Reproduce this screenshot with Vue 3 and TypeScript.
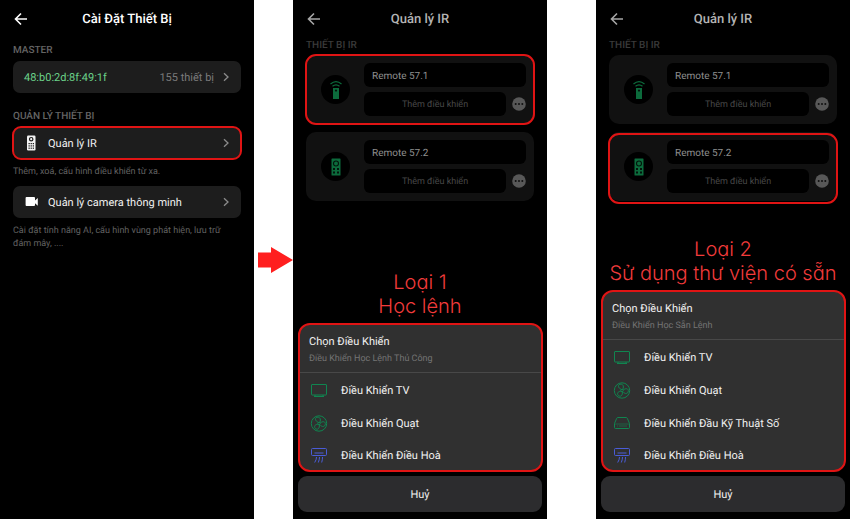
<script setup lang="ts">
type IconName = 'tv' | 'fan' | 'box' | 'ac'

interface Device {
  name: string
  icon: 'signal' | 'pad'
}

interface Option {
  icon: IconName
  label: string
}

interface Screen {
  id: string
  marked: number
  note: string[]
  subtitle: string
  options: Option[]
}

const devices: Device[] = [
  { name: 'Remote 57.1', icon: 'signal' },
  { name: 'Remote 57.2', icon: 'pad' },
]

const tv: Option = { icon: 'tv', label: 'Điều Khiển TV' }
const fan: Option = { icon: 'fan', label: 'Điều Khiển Quạt' }
const box: Option = { icon: 'box', label: 'Điều Khiển Đầu Kỹ Thuật Số' }
const ac: Option = { icon: 'ac', label: 'Điều Khiển Điều Hoà' }

const screens: Screen[] = [
  {
    id: 'learn',
    marked: 0,
    note: ['Loại 1', 'Học lệnh'],
    subtitle: 'Điều Khiển Học Lệnh Thủ Công',
    options: [tv, fan, ac],
  },
  {
    id: 'library',
    marked: 1,
    note: ['Loại 2', 'Sử dụng thư viện có sẵn'],
    subtitle: 'Điều Khiển Học Sẵn Lệnh',
    options: [tv, fan, box, ac],
  },
]
</script>

<template>
  <main class="page">
    <section class="screen settings">
      <header class="bar">
        <button class="back" type="button" aria-label="Quay lại">
          <svg width="14" height="14" viewBox="0 0 14 14"><path d="M13 7H1.5M7 1.5 1.5 7 7 12.5" /></svg>
        </button>
        <h1>Cài Đặt Thiết Bị</h1>
      </header>

      <h2 class="group">MASTER</h2>
      <button class="row" type="button">
        <span class="mac">48:b0:2d:8f:49:1f</span>
        <span class="count">155 thiết bị</span>
        <svg class="chev" width="6" height="10" viewBox="0 0 6 10"><path d="M1 1.2 5 5 1 8.8" /></svg>
      </button>

      <h2 class="group second">QUẢN LÝ THIẾT BỊ</h2>
      <button class="row marked" type="button">
        <svg class="lead" width="16" height="16" viewBox="0 0 16 16">
          <rect x="3" y="0.5" width="8.5" height="15" rx="1.2" fill="#f2f2f2" />
          <circle cx="7.2" cy="4.2" r="1.7" fill="#f2f2f2" stroke="#1d1d1d" stroke-width="1.2" />
          <g fill="#1d1d1d">
            <rect x="4.5" y="8" width="1.3" height="1.2" /><rect x="6.6" y="8" width="1.3" height="1.2" /><rect x="8.7" y="8" width="1.3" height="1.2" />
            <rect x="4.5" y="10.3" width="1.3" height="1.2" /><rect x="6.6" y="10.3" width="1.3" height="1.2" /><rect x="8.7" y="10.3" width="1.3" height="1.2" />
            <rect x="4.5" y="12.6" width="1.3" height="1.2" /><rect x="6.6" y="12.6" width="1.3" height="1.2" /><rect x="8.7" y="12.6" width="1.3" height="1.2" />
          </g>
        </svg>
        <span class="name">Quản lý IR</span>
        <svg class="chev" width="6" height="10" viewBox="0 0 6 10"><path d="M1 1.2 5 5 1 8.8" /></svg>
      </button>
      <p class="hint">Thêm, xoá, cấu hình điều khiển từ xa.</p>

      <button class="row" type="button">
        <svg class="lead" width="16" height="16" viewBox="0 0 16 16">
          <path d="M2.500 3h7.600q.9 0 .9.900v2.600l2.800-2.500v7.800L11 9.300v1.800q0 .9-.9.900H2.500q-.9 0-.9-.900V3.900q0-.9.900-.900Z" fill="#fff" />
        </svg>
        <span class="name">Quản lý camera thông minh</span>
        <svg class="chev" width="6" height="10" viewBox="0 0 6 10"><path d="M1 1.2 5 5 1 8.8" /></svg>
      </button>
      <p class="hint">Cài đặt tính năng AI, cấu hình vùng phát hiện, lưu trữ đám mây, ....</p>
    </section>

    <div class="step">
      <svg width="35" height="26" viewBox="0 0 35 26"><path d="M0 5.500h13V0l22 13-22 13v-5.500H0Z" fill="#ff1f1f" /></svg>
    </div>

    <section v-for="s in screens" :key="s.id" class="screen remote" :class="s.id">
      <header class="bar">
        <button class="back" type="button" aria-label="Quay lại">
          <svg width="14" height="14" viewBox="0 0 14 14"><path d="M13 7H1.500M7 1.500 1.500 7 7 12.500" /></svg>
        </button>
        <h1>Quản lý IR</h1>
      </header>

      <h2 class="group">THIẾT BỊ IR</h2>
      <ul class="devices">
        <li v-for="(d, i) in devices" :key="d.name" class="device" :class="{ marked: i === s.marked }">
          <span class="disc">
            <svg v-if="d.icon === 'signal'" width="14" height="20" viewBox="0 0 14 20">
              <path d="M1.500 4Q7-.8 12.500 4M3.500 6.300Q7 3.300 10.500 6.300" fill="none" stroke="#0c6b3c" stroke-width="1.200" />
              <rect x="4" y="8" width="6" height="11" fill="#0c6b3c" />
              <circle cx="7" cy="10.600" r="1.100" fill="#03150c" />
            </svg>
            <svg v-else width="14" height="20" viewBox="0 0 14 20">
              <rect x="2.500" y="1.500" width="9" height="17" rx="0.600" fill="#0c6b3c" />
              <circle cx="7" cy="6.500" r="2.500" fill="none" stroke="#03150c" stroke-width="1.100" />
              <g fill="#03150c">
                <rect x="4" y="11" width="2" height="2" /><rect x="8" y="11" width="2" height="2" />
                <rect x="4" y="14.500" width="2" height="2" /><rect x="8" y="14.500" width="2" height="2" />
              </g>
            </svg>
          </span>
          <div class="fields">
            <input type="text" :value="d.name" aria-label="Tên thiết bị" />
            <div class="actions">
              <button class="add" type="button">Thêm điều khiển</button>
              <button class="more" type="button" aria-label="Tuỳ chọn">
                <svg width="14" height="14" viewBox="0 0 14 14">
                  <circle cx="7" cy="7" r="6.800" fill="#585858" />
                  <circle cx="3.700" cy="7" r="1" fill="#111" /><circle cx="7" cy="7" r="1" fill="#111" /><circle cx="10.300" cy="7" r="1" fill="#111" />
                </svg>
              </button>
            </div>
          </div>
        </li>
      </ul>

      <p class="note"><span v-for="line in s.note" :key="line">{{ line }}</span></p>

      <div class="sheet">
        <div class="head">
          <h3>Chọn Điều Khiển</h3>
          <p>{{ s.subtitle }}</p>
        </div>
        <button v-for="o in s.options" :key="o.label" class="option" type="button">
          <svg class="glyph" :class="o.icon" width="18" height="18" viewBox="0 0 18 18">
            <template v-if="o.icon === 'tv'">
              <rect x="1.500" y="2.500" width="15" height="10.500" rx="0.500" />
              <path d="M5 13v1.500M13 13v1.500M4 14.500h10" />
            </template>
            <template v-else-if="o.icon === 'fan'">
              <circle cx="9" cy="8.500" r="7.700" />
              <circle cx="9" cy="8.500" r="1.200" />
              <path d="M8.300 7.300C5 6 4.500 3 7 2.300s4.500 1.500 2.700 5.100" />
              <path d="M10.200 8c2.600-2.200 5.500-1.400 5.100 1.200s-3.200 3.200-5.300.6" />
              <path d="M9.300 9.800c.6 3.500-1.700 5.400-3.700 3.900s-1-4.400 2.200-4.500" />
            </template>
            <template v-else-if="o.icon === 'box'">
              <path d="M1.500 8.500 3.700 3.300Q4.100 2.500 5 2.500h8q.9 0 1.300.8l2.200 5.200v4q0 1-1 1h-13q-1 0-1-1Z" />
              <path d="M2 9h14M4 11h1M6 11h8" stroke-width="0.600" />
            </template>
            <template v-else>
              <rect x="1.500" y="1.500" width="15" height="7" rx="1" />
              <path d="M4.500 6h9M6.500 10q0 2.700-1.800 5.500M9.500 10q0 2.700-1.200 5.500M12.500 10q0 2.700-.8 5.500" />
            </template>
          </svg>
          <span>{{ o.label }}</span>
        </button>
      </div>
      <button class="cancel" type="button">Huỷ</button>
    </section>
  </main>
</template>

<style>
body {
  margin: 0;
  background: #fff;
}
</style>

<style scoped>
.page {
  display: grid;
  grid-template-columns: 254fr 39fr 254fr 49fr 254fr;
  min-height: 100vh;
  padding-bottom: 1px;
  box-sizing: border-box;
  font-family: Roboto, "Liberation Sans", sans-serif;
  font-size: 11px;
  text-rendering: geometricPrecision;
}
.page *,
.page *::after {
  box-sizing: border-box;
}
.library {
  grid-column: 5;
}
button,
input {
  font: inherit;
  color: inherit;
  text-rendering: inherit;
  border: 0;
  margin: 0;
  padding: 0;
  background: none;
}
h1,
h2,
h3,
p,
ul {
  margin: 0;
  padding: 0;
  font-weight: 400;
}
svg {
  display: block;
  flex: none;
}
.screen {
  display: flex;
  flex-direction: column;
  background: #000;
  color: #f0f0f0;
}
.step {
  display: grid;
  place-items: center end;
}
.bar {
  display: grid;
  grid-template-columns: 30px 1fr 30px;
  align-items: center;
  height: 38px;
  padding: 0 14px;
  color: #fff;
}
.back path {
  fill: none;
  stroke: currentColor;
  stroke-width: 1.6;
}
h1 {
  font-size: 13px;
  font-weight: 500;
  text-align: center;
}
.group {
  margin: 7px 13px 4px;
  font-size: 10px;
  font-weight: 500;
  line-height: 12px;
  color: #646464;
}
.group.second {
  margin-top: 18px;
}
.row {
  position: relative;
  display: flex;
  align-items: center;
  height: 32px;
  margin: 0 13px;
  padding: 0 12px 0 11px;
  border-radius: 7px;
  background: #1d1d1d;
  text-align: left;
}
.mac {
  flex: 1;
  color: #6bd28a;
}
.count {
  margin-right: 9px;
  color: #7a7a7a;
}
.lead {
  margin-right: 8px;
}
.name {
  flex: 1;
}
.chev path {
  fill: none;
  stroke: #8c8c8c;
  stroke-width: 1.3;
}
.marked::after {
  content: "";
  position: absolute;
  inset: -1px;
  border: 2px solid #e01414;
  border-radius: 9px;
  pointer-events: none;
}
.hint {
  margin: 7px 13px;
  padding-right: 12px;
  font-size: 9px;
  line-height: 13px;
  color: #626262;
}

.remote .bar {
  color: #a6a6a6;
}
.remote h1 {
  color: #b4b4b4;
}
.remote .group {
  margin: 2px 13px 3px;
  color: #3a3a3a;
}
.devices {
  display: grid;
  gap: 8px;
  margin: 0 13px;
  list-style: none;
}
.device {
  position: relative;
  display: flex;
  align-items: center;
  gap: 14px;
  padding: 8px 8px 8px 15px;
  border-radius: 10px;
  background: #111;
}
.device.marked::after {
  border-radius: 11px;
}
.library .device.marked::after {
  inset: 1px -1px -3px;
}
.disc {
  display: grid;
  place-items: center;
  flex: none;
  width: 29px;
  height: 29px;
  border-radius: 50%;
  background: #000;
}
.fields {
  display: grid;
  gap: 5px;
  flex: 1;
  min-width: 0;
}
.fields input {
  width: 100%;
  height: 24px;
  padding: 2px 8px 0;
  border-radius: 6px;
  background: #000;
  color: #8f8f8f;
  font-size: 10px;
}
.actions {
  display: flex;
  align-items: center;
  gap: 6px;
}
.add {
  flex: 1;
  height: 24px;
  padding-top: 2px;
  border-radius: 6px;
  background: #000;
  color: #484848;
  font-size: 9px;
}
.note {
  display: grid;
  margin-top: auto;
  margin-bottom: 5px;
  font-family: Inter, sans-serif;
  font-size: 20px;
  font-weight: 300;
  font-feature-settings: "cv11";
  line-height: 24px;
  text-align: center;
  white-space: nowrap;
  color: #f23b3b;
}
.sheet {
  display: grid;
  margin: 0 4px 4px 5px;
  overflow: hidden;
  border: 2px solid #e01414;
  border-radius: 12px;
  background: #303030;
}
.head {
  height: 48px;
  padding: 8px 9px 0;
  border-bottom: 1px solid #484848;
}
h3 {
  font-size: 11px;
  line-height: 17px;
}
.head p {
  font-size: 9px;
  line-height: 18px;
  color: #747474;
}
.option {
  display: flex;
  align-items: center;
  gap: 13px;
  height: 33px;
  padding: 2px 10px 0;
  text-align: left;
}
.option:last-child {
  height: 31px;
}
.glyph {
  fill: none;
  stroke: #108550;
  stroke-width: 1;
}
.glyph.ac {
  stroke: #4a5cd8;
}
.cancel {
  height: 36px;
  margin: 0 5px 7px;
  border-radius: 9px;
  background: #2c2c2e;
}
</style>
